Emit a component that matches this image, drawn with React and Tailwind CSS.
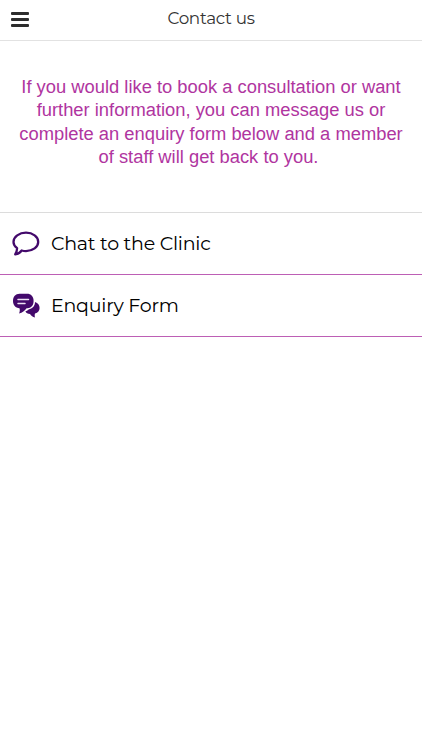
import React from 'react';

const ChatIcon = () => (
  <svg className="block h-[25px] w-[28px]" viewBox="0 0 28 25" fill="none">
    <path
      d="M14 1.7C20.8 1.7 26.2 5.8 26.2 10.9S20.8 20.1 14 20.1C12.5 20.1 11 19.9 9.7 19.5C8 21.8 6 23.1 3.2 23.4C4.4 21.6 5 19.8 5.1 17.2C3 15.6 1.5 13.4 1.5 10.9C1.5 5.8 7.3 1.7 14 1.7Z"
      stroke="#43096b"
      strokeWidth="2.3"
      strokeLinejoin="round"
    />
  </svg>
);

const EnquiryIcon = () => (
  <svg className="block h-[25px] w-[28px]" viewBox="0 0 28 25">
    <path
      d="M7.5 .8H15C19 .8 21.6 3.5 21.6 8S19 15.2 15.5 15.2H14.6C12.7 17.8 10.4 19.6 7.1 20.4C7.9 18.4 8 16.8 7.5 15.2C3.5 14.9 1 12.2 1 8S3.5 .8 7.5 .8Z"
      fill="#43096b"
    />
    <path d="M6 6.5H16.5M6 10.6H13" stroke="#ece2f3" strokeWidth="1.5" strokeLinecap="round" />
    <path
      d="M23 9C26 10 27.6 12.1 27.6 15C27.6 17.6 26 19.7 23 20.6C22.5 22 22.7 23.4 23 24.6C20.8 24.2 19.2 22.8 18 21.1C15.9 21.1 14.1 20 13.4 18.3C15 17.8 15.9 17.1 16.6 16.4C20.3 15.8 23 13 23 9Z"
      fill="#43096b"
    />
  </svg>
);

const items = [
  { label: 'Chat to the Clinic', icon: ChatIcon },
  { label: 'Enquiry Form', icon: EnquiryIcon },
];

export default function App() {
  return (
    <div className="min-h-screen bg-white font-['Montserrat',Inter,sans-serif]">
      <header className="grid h-[41px] grid-cols-[1fr_auto_1fr] items-center border-b border-[#e2e2e2] px-[11px] pb-1">
        <button aria-label="Menu" className="flex w-[18px] flex-col gap-[3px] pt-[3px]">
          <span className="h-[3px] w-full rounded-[1px] bg-[#2d2d2d]" />
          <span className="h-[3px] w-full rounded-[1px] bg-[#2d2d2d]" />
          <span className="h-[3px] w-full rounded-[1px] bg-[#2d2d2d]" />
        </button>
        <h1 className="pt-px text-[16.8px] tracking-[-0.28px] text-[#333]">Contact us</h1>
      </header>

      <section className="h-[171px] pt-[34px] text-center font-['Liberation_Sans',Arial,sans-serif] text-[18.35px] leading-[23.4px] text-[#b0359f]">
        <p className="-mr-px pr-px">
          If you would like to book a consultation or want
          <br />
          further information, you can message us or
          <br />
          complete an enquiry form below and a member
          <br />
          <span className="pr-[5px]">of staff will get back to you.</span>
        </p>
      </section>

      <ul className="border-t border-[#dcdcdc]">
        {items.map(({ label, icon: Icon }) => (
          <li key={label} className="flex h-[62px] items-center gap-[11px] border-b border-[#bd5fb5] pl-3">
            <Icon />
            <span className="pt-px text-[19px] tracking-[-0.23px] text-black">{label}</span>
          </li>
        ))}
      </ul>
    </div>
  );
}
